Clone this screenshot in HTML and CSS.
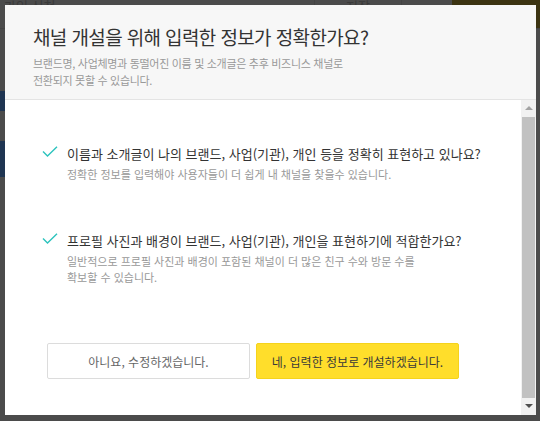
FILE: index.html
```html
<!DOCTYPE html>
<html lang="ko">
<head>
    <meta charset="UTF-8">
    <title>채널 개설 확인</title>
    <link rel="stylesheet" href="styles.css">
</head>
<body>
    <div class="page">
        <div class="topbar">
            <span class="topbar-title">가입 신청</span>
            <span class="topbar-tab">저장</span>
            <span class="topbar-btn"></span>
        </div>
        <div class="side">
            <div class="side-mark"></div>
            <div class="side-mark tall"></div>
        </div>
    </div>

    <div class="modal">
        <div class="modal-head">
            <h2>채널 개설을 위해 입력한 정보가 정확한가요?</h2>
            <p>브랜드명, 사업체명과 동떨어진 이름 및 소개글은 추후 비즈니스 채널로<br>전환되지 못할 수 있습니다.</p>
        </div>
        <div class="modal-body">
            <div class="modal-content">
                <div class="check-item">
                    <svg class="check" width="16" height="11" viewBox="0 0 16 11"><path d="M1 5.5 L5.5 10 L15 0.8" fill="none" stroke="#2cc3bd" stroke-width="1.4"/></svg>
                    <div>
                        <h4>이름과 소개글이 나의 브랜드, 사업(기관), 개인 등을 정확히 표현하고 있나요?</h4>
                        <p>정확한 정보를 입력해야 사용자들이 더 쉽게 내 채널을 찾을수 있습니다.</p>
                    </div>
                </div>
                <div class="check-item">
                    <svg class="check" width="16" height="11" viewBox="0 0 16 11"><path d="M1 5.5 L5.5 10 L15 0.8" fill="none" stroke="#2cc3bd" stroke-width="1.4"/></svg>
                    <div>
                        <h4>프로필 사진과 배경이 브랜드, 사업(기관), 개인을 표현하기에 적합한가요?</h4>
                        <p>일반적으로 프로필 사진과 배경이 포함된 채널이 더 많은 친구 수와 방문 수를<br>확보할 수 있습니다.</p>
                    </div>
                </div>
                <div class="buttons">
                    <button class="btn-no">아니요, 수정하겠습니다.</button>
                    <button class="btn-yes">네, 입력한 정보로 개설하겠습니다.</button>
                </div>
            </div>
            <div class="scrollbar">
                <div class="arrow up"></div>
                <div class="thumb"></div>
                <div class="arrow down"></div>
            </div>
        </div>
    </div>
</body>
</html>
```
FILE: styles.css
```css
body {
    margin: 0;
    background-color: #4b4b4b;
    font-family: "Noto Sans CJK KR", "Noto Sans", sans-serif;
    width: 540px;
    height: 421px;
    overflow: hidden;
}
.page {
    height: 421px;
}
.topbar {
    display: flex;
    height: 28px;
    border-bottom: 1px solid #444;
    color: #3a3a3a;
    font-size: 13px;
}
.topbar-title {
    padding: 0 0 0 4px;
    line-height: 12px;
    width: 310px;
    border-right: 1px solid #444;
}
.topbar-tab {
    width: 86px;
    text-align: center;
    line-height: 12px;
    border-right: 1px solid #444;
}
.topbar-btn {
    flex: 1;
    margin-left: 50px;
    background: #3c3412;
}
.side {
    width: 5px;
    padding-top: 62px;
}
.side-mark {
    height: 20px;
    background: #1f3552;
}
.side-mark.tall {
    margin-top: 30px;
    height: 36px;
}

.modal {
    position: fixed;
    top: 5px;
    left: 5px;
    width: 531px;
    height: 410px;
    background: white;
    display: flex;
    flex-direction: column;
}
.modal-head {
    height: 95px;
    box-sizing: border-box;
    padding: 20px 28px 0;
    background: #f7f7f7;
    border-bottom: 1px solid #e4e4e4;
}
.modal-head h2 {
    margin: 0;
    font-size: 19px;
    font-weight: normal;
    color: #333;
    letter-spacing: -0.62px;
    line-height: 24px;
}
.modal-head p {
    margin: 6px 0 0;
    font-size: 11px;
    line-height: 17px;
    color: #999;
    letter-spacing: -0.3px;
}
.modal-body {
    flex: 1;
    display: flex;
}
.modal-content {
    flex: 1;
    padding: 45px 0 0 37px;
}
.check-item {
    display: flex;
    gap: 9px;
    margin-bottom: 50px;
}
.check {
    margin-top: 1px;
}
.check-item h4 {
    margin: 0;
    font-size: 13px;
    font-weight: normal;
    color: #333;
    line-height: 18px;
    letter-spacing: 0;
}
.check-item p {
    margin: 3px 0 0;
    font-size: 11px;
    color: #999;
    line-height: 16px;
    letter-spacing: 0;
}
.buttons {
    display: flex;
    gap: 6px;
    margin: 58px 0 0 5px;
}
.buttons button {
    width: 203px;
    height: 36px;
    font-family: inherit;
    font-size: 12px;
    border-radius: 2px;
    letter-spacing: 0;
}
.btn-no {
    background: white;
    border: 1px solid #dcdcdc;
    color: #666;
}
.btn-yes {
    background: #ffde2b;
    border: 1px solid #f5d31c;
    color: #3a3a3a;
}
.scrollbar {
    width: 15px;
    background: #f1f1f1;
    display: flex;
    flex-direction: column;
}
.arrow {
    height: 17px;
    position: relative;
}
.arrow::after {
    content: "";
    position: absolute;
    left: 4px;
    border-left: 4px solid transparent;
    border-right: 4px solid transparent;
}
.arrow.up::after {
    top: 6px;
    border-bottom: 4px solid #a3a3a3;
}
.arrow.down::after {
    top: 6px;
    border-top: 4px solid #505050;
}
.thumb {
    flex: 1;
    margin: 0 1px;
    background: #c1c1c1;
}
```
